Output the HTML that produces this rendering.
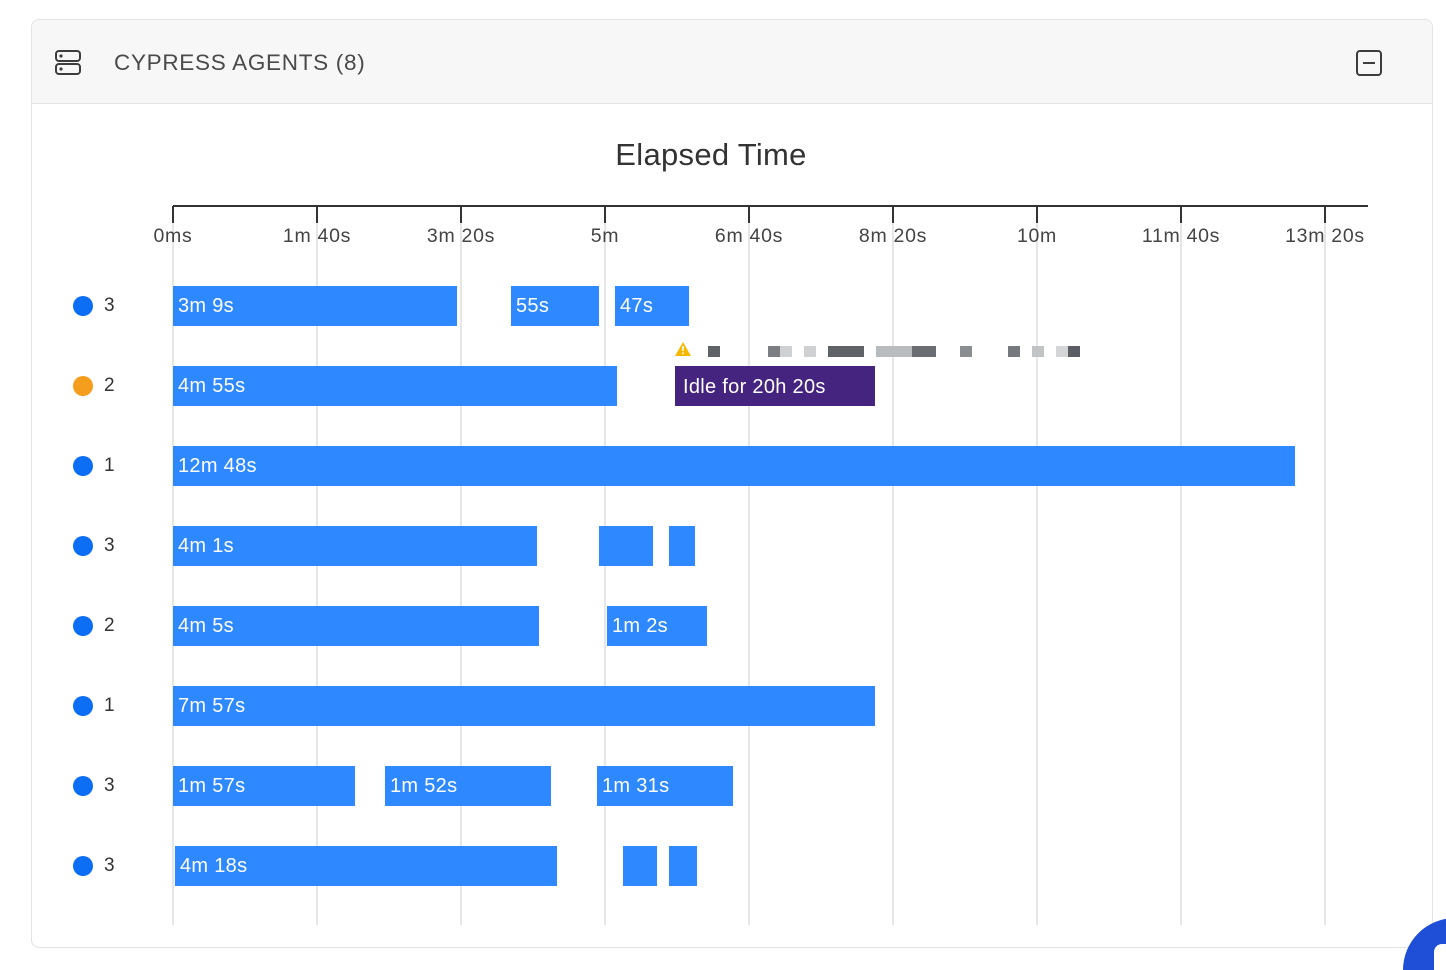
<!DOCTYPE html>
<html style="width:1446px;height:970px;overflow:hidden"><head><style>
body{margin:0;width:1446px;height:970px;background:#fff;position:relative;overflow:hidden;font-family:"Liberation Sans",sans-serif;}
.card{position:absolute;left:31px;top:19px;width:1400px;height:927px;border:1px solid #e3e3e3;border-radius:8px;overflow:hidden;}
.hdr{position:absolute;left:0;top:0;right:0;height:83px;background:#f7f7f7;border-bottom:1px solid #e3e3e3;}
.t{position:absolute;left:82px;top:30px;font-size:22.5px;color:#4a4a4a;letter-spacing:0.7px;}
.a{position:absolute;}
.bar{position:absolute;height:40px;background:#2e88ff;color:#fff;font-size:20px;line-height:40px;padding-left:5px;box-sizing:border-box;white-space:nowrap;letter-spacing:0.3px;}
.g{position:absolute;top:206px;width:2px;height:719px;background:#e6e6e6;}
.tk{position:absolute;top:206px;width:2px;height:17px;background:#333;}
.lb{position:absolute;top:225px;font-size:19.5px;color:#444;width:120px;text-align:center;letter-spacing:0.7px;}
.dot{position:absolute;left:73px;width:20px;height:20px;border-radius:50%;background:#0b6ef5;}
.n{position:absolute;left:104px;font-size:19px;color:#333;}
.px{position:absolute;top:346px;width:12px;height:11px;}
</style></head><body>
<div class="card"><div class="hdr">
<svg class="a" style="left:22px;top:29px" width="28" height="28" viewBox="0 0 28 28" fill="none" stroke="#3d3d3d" stroke-width="2"><rect x="2" y="2" width="24" height="10" rx="3"/><rect x="2" y="15" width="24" height="10" rx="3"/><circle cx="7" cy="7" r="0.6" fill="#3d3d3d"/><circle cx="7" cy="20" r="0.6" fill="#3d3d3d"/></svg>
<div class="t">CYPRESS AGENTS (8)</div>
<svg class="a" style="left:1323px;top:29px" width="28" height="28" viewBox="0 0 28 28" fill="none" stroke="#3d3d3d" stroke-width="2"><rect x="2" y="2" width="24" height="24" rx="3"/><line x1="8" y1="14" x2="20" y2="14"/></svg>
</div></div>
<div class="a" style="left:0;width:1422px;top:137px;text-align:center;font-size:31px;color:#333;letter-spacing:0.3px">Elapsed Time</div>
<div class="a" style="left:173px;top:205px;width:1195px;height:2px;background:#333"></div>
<div class="g" style="left:172px"></div><div class="g" style="left:316px"></div><div class="g" style="left:460px"></div><div class="g" style="left:604px"></div><div class="g" style="left:748px"></div><div class="g" style="left:892px"></div><div class="g" style="left:1036px"></div><div class="g" style="left:1180px"></div><div class="g" style="left:1324px"></div>
<div class="tk" style="left:172px"></div><div class="tk" style="left:316px"></div><div class="tk" style="left:460px"></div><div class="tk" style="left:604px"></div><div class="tk" style="left:748px"></div><div class="tk" style="left:892px"></div><div class="tk" style="left:1036px"></div><div class="tk" style="left:1180px"></div><div class="tk" style="left:1324px"></div>
<div class="lb" style="left:113px">0ms</div><div class="lb" style="left:257px">1m 40s</div><div class="lb" style="left:401px">3m 20s</div><div class="lb" style="left:545px">5m</div><div class="lb" style="left:689px">6m 40s</div><div class="lb" style="left:833px">8m 20s</div><div class="lb" style="left:977px">10m</div><div class="lb" style="left:1121px">11m 40s</div><div class="lb" style="left:1265px">13m 20s</div>

<div class="dot" style="top:296px"></div><div class="n" style="top:295px">3</div>
<div class="dot" style="top:376px;background:#f59d1d"></div><div class="n" style="top:375px">2</div>
<div class="dot" style="top:456px"></div><div class="n" style="top:455px">1</div>
<div class="dot" style="top:536px"></div><div class="n" style="top:535px">3</div>
<div class="dot" style="top:616px"></div><div class="n" style="top:615px">2</div>
<div class="dot" style="top:696px"></div><div class="n" style="top:695px">1</div>
<div class="dot" style="top:776px"></div><div class="n" style="top:775px">3</div>
<div class="dot" style="top:856px"></div><div class="n" style="top:855px">3</div>

<div class="bar" style="top:286px;left:173px;width:284px">3m 9s</div>
<div class="bar" style="top:286px;left:511px;width:88px">55s</div>
<div class="bar" style="top:286px;left:615px;width:74px">47s</div>
<div class="bar" style="top:366px;left:173px;width:444px">4m 55s</div>
<div class="bar" style="top:366px;left:675px;width:200px;background:#45247f;padding-left:8px;line-height:42px">Idle for 20h 20s</div>
<svg class="a" style="left:675px;top:342px" width="16" height="14" viewBox="0 0 16 14"><path d="M8 0L16 14H0Z" fill="#f5b800"/><rect x="7.2" y="4" width="1.6" height="5" fill="#fff"/><rect x="7.2" y="10.5" width="1.6" height="1.6" fill="#fff"/></svg>
<div class="px" style="left:708px;background:#5f6368"></div><div class="px" style="left:768px;background:#7b7e82"></div><div class="px" style="left:780px;background:#cfd0d2"></div><div class="px" style="left:804px;background:#cfd0d2"></div><div class="px" style="left:828px;background:#5f6368;width:36px"></div><div class="px" style="left:876px;background:#b9bcbf;width:36px"></div><div class="px" style="left:912px;background:#6a6d71;width:24px"></div><div class="px" style="left:960px;background:#8b8e91"></div><div class="px" style="left:1008px;background:#76797d"></div><div class="px" style="left:1032px;background:#c2c3c5"></div><div class="px" style="left:1056px;background:#d4d5d7"></div><div class="px" style="left:1068px;background:#5a5e64"></div>
<div class="bar" style="top:446px;left:173px;width:1122px">12m 48s</div>
<div class="bar" style="top:526px;left:173px;width:364px">4m 1s</div>
<div class="bar" style="top:526px;left:599px;width:54px"></div>
<div class="bar" style="top:526px;left:669px;width:26px"></div>
<div class="bar" style="top:606px;left:173px;width:366px">4m 5s</div>
<div class="bar" style="top:606px;left:607px;width:100px">1m 2s</div>
<div class="bar" style="top:686px;left:173px;width:702px">7m 57s</div>
<div class="bar" style="top:766px;left:173px;width:182px">1m 57s</div>
<div class="bar" style="top:766px;left:385px;width:166px">1m 52s</div>
<div class="bar" style="top:766px;left:597px;width:136px">1m 31s</div>
<div class="bar" style="top:846px;left:175px;width:382px">4m 18s</div>
<div class="bar" style="top:846px;left:623px;width:34px"></div>
<div class="bar" style="top:846px;left:669px;width:28px"></div>
<div class="a" style="left:1403px;top:918px;width:110px;height:52px;border-radius:55px 55px 0 0;background:#1f4fd6;overflow:hidden"><div style="position:absolute;left:31px;top:26px;width:20px;height:40px;border-radius:8px;background:#fff"></div></div>
</body></html>
